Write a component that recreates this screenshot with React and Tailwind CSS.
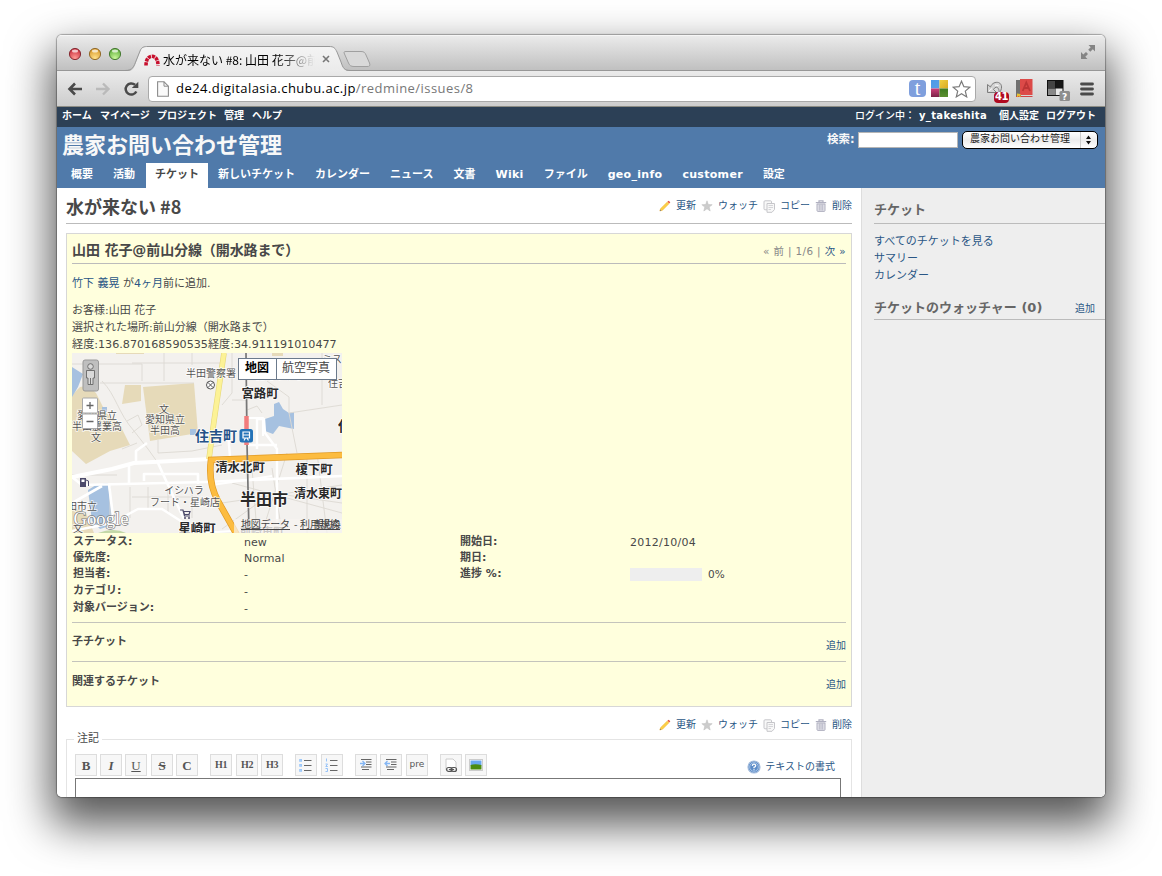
import React from "react";

const NAV = ["概要", "活動", "チケット", "新しいチケット", "カレンダー", "ニュース", "文書", "Wiki", "ファイル", "geo_info", "customer", "設定"];

function TrafficLight({ from, mid, rim }) {
  const id = "tl" + rim.slice(1);
  return (
    <svg width="14" height="14" viewBox="0 0 14 14">
      <defs>
        <radialGradient id={id} cx="50%" cy="85%" r="80%">
          <stop offset="0" stopColor={from} />
          <stop offset="1" stopColor={mid} />
        </radialGradient>
      </defs>
      <circle cx="7" cy="7" r="5.600" fill={`url(#${id})`} stroke={rim} strokeWidth=".9" />
      <ellipse cx="7" cy="4" rx="3" ry="1.500" fill="#fff" opacity=".7" />
    </svg>
  );
}

function TitleBar() {
  return (
    <div className="relative flex h-9 shrink-0 items-end bg-gradient-to-b from-[#ececec] to-[#bfbfbf]">
      <svg className="absolute inset-0" width="1048" height="36" viewBox="0 0 1048 36">
        <defs>
          <linearGradient id="tab" x1="0" y1="0" x2="0" y2="1">
            <stop offset="0" stopColor="#f4f4f4" />
            <stop offset="1" stopColor="#ebebeb" />
          </linearGradient>
        </defs>
        <path d="M0 .5H1048" stroke="#f6f6f6" />
        <path d="M0 35.500H1048" stroke="#979797" />
        <path d="M70 36C77 36 77.500 31 79.500 26L83.500 16C85 12.500 87 11.500 91 11.500H272C277 11.500 278 13 280 17L284 27C286 33 287 36 293 36Z" fill="url(#tab)" />
        <path d="M68 35.500C76 35.500 77 31 79 26L83 16C84.500 12 87 11.500 91 11.500H272C277 11.500 278 13 280 17L284 27C286 33 287 35.500 294 35.500" fill="none" stroke="#979797" />
        <path d="M289 16.500H304C307 16.500 308 17.500 309 20L312.500 28C313.500 31 312.500 31.500 310 31.500H297C294 31.500 292.500 30.500 291.500 28L287.500 19C286.500 17 287 16.500 289 16.500Z" fill="#d9d9d9" stroke="#a0a0a0" />
        <g fill="#858585">
          <path d="M1031.500 10H1038V16.500L1035.800 14.300L1033.300 16.800L1031.200 14.700L1033.700 12.200Z" />
          <path d="M1024 17V24H1030.500L1028.300 21.700L1031 19L1029 17L1026.300 19.400Z" />
        </g>
      </svg>
      <div className="relative flex h-full w-full items-center">
        <div className="mt-0.5 ml-[11px] flex gap-1.5 pb-px">
          <TrafficLight from="#ff9a94" mid="#c92c3c" rim="#7d2028" />
          <TrafficLight from="#ffe08a" mid="#d9992a" rim="#8a6220" />
          <TrafficLight from="#c9f79a" mid="#5fae3a" rim="#3c7228" />
        </div>
        <svg className="mt-3 ml-[21px]" width="18" height="13" viewBox="0 0 18 13">
          <path d="M3 12.500C3 6.500 5.500 3.300 9 3.300S15 6.500 15 12.500" fill="none" stroke="#c8102e" strokeWidth="3.600" strokeDasharray="3.200 .8" />
        </svg>
        <div className="mt-[13px] ml-0.5 w-[152px] overflow-hidden bg-gradient-to-r from-black from-75% to-transparent bg-clip-text font-['Noto_Sans_CJK_JP',sans-serif] text-[12px] leading-4 whitespace-nowrap text-transparent">
          水が来ない #8: 山田 花子@前山
        </div>
        <svg className="mt-3 ml-[7px]" width="8" height="8" viewBox="0 0 8 8">
          <path d="M1 1L7 7M7 1L1 7" stroke="#777" strokeWidth="1.600" />
        </svg>
      </div>
    </div>
  );
}

function ToolBar() {
  return (
    <div className="flex h-9 shrink-0 items-center border-b border-[#8c8c84] bg-gradient-to-b from-[#ebebeb] to-[#cdcdcd]">
      <svg className="ml-[10px]" width="16" height="14" viewBox="0 0 16 14">
        <path d="M15 7H3M8 1.500L2.500 7L8 12.500" fill="none" stroke="#4a4a4a" strokeWidth="2.600" />
      </svg>
      <svg className="ml-3" width="16" height="14" viewBox="0 0 16 14">
        <path d="M1 7H13M8 1.500L13.500 7L8 12.500" fill="none" stroke="#bababa" strokeWidth="2.400" />
      </svg>
      <svg className="ml-3" width="16" height="16" viewBox="0 0 16 16">
        <path d="M13.300 10.500A5.600 5.600 0 1 1 12 3.800" fill="none" stroke="#4a4a4a" strokeWidth="2.500" />
        <path d="M15.300 .8V7H8.800Z" fill="#4a4a4a" />
      </svg>
      <div className="ml-[9px] flex h-[26px] w-[828px] items-center rounded border border-[#a9a9a9] bg-white">
        <svg className="ml-2" width="12" height="16" viewBox="0 0 12 16">
          <path d="M.6 .8H7L11.400 5.200V15.200H.6Z" fill="#fafafa" stroke="#8b8b8b" strokeWidth="1.100" />
          <path d="M7 .8V5.200H11.400" fill="none" stroke="#8b8b8b" />
        </svg>
        <div className="ml-[7px] w-[733px] pb-0.5 font-['Open_Sans','Noto_Sans',sans-serif] text-[13px] leading-4 tracking-[0.45px] whitespace-nowrap text-[#777]">
          <span className="text-black">de24.digitalasia.chubu.ac.jp</span>/redmine/issues/8
        </div>
        <div className="flex h-[17px] w-[17px] items-center justify-center rounded-sm bg-[#7f9fdd] pb-0.5 font-['Liberation_Serif',serif] text-[20px] leading-none text-white">t</div>
        <svg className="ml-[5px]" width="17" height="17" viewBox="0 0 17 17">
          <defs>
            <linearGradient id="q1" x1="0" y1="0" x2="1" y2="1"><stop offset="0" stopColor="#4d9ae8" /><stop offset="1" stopColor="#5aa0e6" /></linearGradient>
            <linearGradient id="q2" x1="0" y1="0" x2="1" y2="1"><stop offset="0" stopColor="#f0d040" /><stop offset="1" stopColor="#d8a820" /></linearGradient>
            <linearGradient id="q3" x1="0" y1="0" x2="0" y2="1"><stop offset="0" stopColor="#d0407a" /><stop offset="1" stopColor="#7a2448" /></linearGradient>
            <linearGradient id="q4" x1="0" y1="0" x2="0" y2="1"><stop offset="0" stopColor="#3c7a20" /><stop offset="1" stopColor="#5c9030" /></linearGradient>
          </defs>
          <rect width="8.500" height="8.500" fill="url(#q1)" /><rect x="8.500" width="8.500" height="8.500" fill="url(#q2)" />
          <rect y="8.500" width="8.500" height="8.500" fill="url(#q3)" /><rect x="8.500" y="8.500" width="8.500" height="8.500" fill="url(#q4)" />
        </svg>
        <svg className="ml-1" width="19" height="18" viewBox="0 0 19 18">
          <path d="M9.500 1.200L11.900 6.700L17.800 7.200L13.300 11.100L14.700 16.900L9.500 13.800L4.300 16.900L5.700 11.100L1.200 7.200L7.100 6.700Z" fill="#fff" stroke="#7a7a7a" strokeWidth="1.200" />
        </svg>
      </div>
      <div className="relative ml-[10px] h-6 w-6">
        <svg className="absolute top-1 left-0" width="18" height="14" viewBox="0 0 18 14">
          <path d="M1.500 11.500V3.500L4.500 6C6 2 9.500 .8 12.500 1.500C16.500 3 16.500 8 13 12.500C13.500 8.500 12 6 10 6.200C8.800 6.500 8 7.500 7.500 8.500L10.500 11.500Z" fill="#d4d4d4" stroke="#7c7c7c" />
          <path d="M3 10L6 7.500M9 4L12.500 4.500" stroke="#fff" />
        </svg>
        <div className="absolute top-[15px] left-2 flex h-[11px] w-[15px] items-center justify-center rounded-sm bg-[#b00a20] font-['DejaVu_Sans'] text-[10px] leading-none font-bold tracking-[-.5px] text-white">41</div>
      </div>
      <svg className="ml-[6px]" width="17" height="19" viewBox="0 0 17 19">
        <rect x="0" y="1" width="5" height="16" fill="#707070" />
        <rect x="4" y="0" width="12.500" height="16" fill="#dc4a48" />
        <path d="M0 17.500H16.500" stroke="#d04444" />
        <path d="M1 14.500L4.500 15V18.500L2.500 17L1 18.500Z" fill="#e8c030" />
        <path d="M6.700 12L10.300 3.500L14 12M8 9H12.700" fill="none" stroke="#bc3535" strokeWidth="1.800" />
      </svg>
      <svg className="ml-[14px]" width="24" height="24" viewBox="0 0 24 24">
        <rect x="0" y="3" width="16.500" height="16" fill="#111" />
        <rect x="1" y="4" width="7" height="7" fill="#444" /><rect x="8.500" y="4" width="7" height="7" fill="#161616" />
        <rect x="1" y="11.500" width="7" height="6.500" fill="#888" /><rect x="8.500" y="11.500" width="7" height="6.500" fill="#e8e8e8" />
        <rect x="12.500" y="14" width="10.500" height="10" rx="1.500" fill="#8e8e8e" />
        <text x="17.700" y="22.500" textAnchor="middle" fontSize="9" fontWeight="bold" fontFamily="DejaVu Sans" fill="#fff">?</text>
      </svg>
      <svg className="ml-[9px]" width="14" height="14" viewBox="0 0 14 14">
        <path d="M1.500 2H12.500M1.500 7H12.500M1.500 12H12.500" stroke="#4a4a4a" strokeWidth="2.800" strokeLinecap="round" />
      </svg>
    </div>
  );
}

function TopMenu() {
  return (
    <div className="flex h-5 shrink-0 justify-between bg-[#2c4056] pr-[9px] pl-[5px] text-[10px] leading-[17px] font-bold whitespace-nowrap text-white">
      <div className="flex">
        <span className="w-[38px]">ホーム</span>
        <span className="w-[57px]">マイページ</span>
        <span className="w-[67px]">プロジェクト</span>
        <span className="w-7">管理</span>
        <span>ヘルプ</span>
      </div>
      <div className="flex">
        <span className="w-16 font-medium">ログイン中：</span>
        <span className="w-20 tracking-[0.35px]">y_takeshita</span>
        <span className="w-[47px]">個人設定</span>
        <span className="w-[50px]">ログアウト</span>
      </div>
    </div>
  );
}

function Header() {
  return (
    <div className="flex h-[61px] shrink-0 flex-col justify-between bg-[#507aaa] text-white">
      <div className="flex h-9 justify-between pr-[7px] pl-[5px]">
        <h1 className="pt-px text-[22px] leading-9 font-bold text-[#f8f8f8]">農家お問い合わせ管理</h1>
        <div className="flex h-[26px] items-center">
          <span className="w-[31px] text-[11.500px] leading-none font-bold text-[#f8f8f8]">検索:</span>
          <span className="h-4 w-[100px] border border-[#b5b5b5] bg-white" />
          <span className="ml-1 flex h-[18px] w-[136px] items-center justify-between rounded-[5px] border border-black bg-gradient-to-b from-white via-[#ececec] to-white pl-[7px] text-[10px] leading-none text-[#222]">
            <span className="pb-0.5">農家お問い合わせ管理</span>
            <svg width="17" height="16" viewBox="0 0 17 16">
              <path d="M.5 0V16" stroke="#ccc" />
              <path d="M8.500 3.500L11 7H6ZM8.500 12.500L11 9H6Z" fill="#111" />
            </svg>
          </span>
        </div>
      </div>
      <nav className="flex h-[25px] pl-1 text-[11px] leading-[23px] font-bold whitespace-nowrap">
        {NAV.map((n) => (
          <span
            key={n}
            className={
              n === "チケット"
                ? "ml-px w-[62px] bg-white text-center text-[#484848]"
                : /[a-z]/.test(n)
                  ? "px-[10px] tracking-[0.3px]"
                  : "px-[10px]"
            }
          >
            {n}
          </span>
        ))}
      </nav>
    </div>
  );
}

function PencilIcon() {
  return (
    <svg width="12" height="12" viewBox="0 0 12 12">
      <path d="M.8 11L1.700 8.500L8.300 2L10 3.700L3.500 10.200Z" fill="#fbd048" stroke="#f0b030" strokeWidth=".5" />
      <path d="M8.500 1.700L9.700 .7L11.300 2.300L10.200 3.500Z" fill="#e8503c" />
      <path d="M.8 11L1.300 9.600L2.300 10.600Z" fill="#777" />
    </svg>
  );
}
function StarIcon() {
  return (
    <svg width="12" height="12" viewBox="0 0 12 12">
      <path d="M6 .8L7.300 4.500L11.200 4.700L8.200 7.100L9.200 11L6 8.800L2.800 11L3.800 7.100L.8 4.700L4.700 4.500Z" fill="#cccccc" stroke="#bcbcbc" strokeWidth=".5" />
    </svg>
  );
}
function CopyIcon() {
  return (
    <svg width="13" height="13" viewBox="0 0 13 13" fill="#f8f8f8" stroke="#c6c6ca">
      <rect x="1" y=".8" width="7.500" height="9" rx="1" />
      <path d="M4 3.500H11.500V9.500L9 12.300H4Z" />
      <path d="M5.500 5.500H10M5.500 7.500H10M5.500 9.500H8" strokeWidth=".7" />
    </svg>
  );
}
function TrashIcon() {
  return (
    <svg width="12" height="12" viewBox="0 0 12 12" fill="none" stroke="#b0b0c0">
      <path d="M.8 2.600H11.200M4 2V.8H8V2" strokeWidth="1.200" />
      <path d="M2 4V10.500Q2 11.400 3 11.400H9Q10 11.400 10 10.500V4Z" fill="#e4e4ea" />
      <path d="M4.300 4.500V10.500M6 4.500V10.500M7.700 4.500V10.500" strokeWidth=".8" />
    </svg>
  );
}

function Contextual() {
  return (
    <div className="flex h-4 items-center text-[10px] leading-none whitespace-nowrap text-[#2a5685]">
      <PencilIcon /><span className="ml-[5px] w-[25px]">更新</span>
      <StarIcon /><span className="ml-[5px] w-[45px]">ウォッチ</span>
      <CopyIcon /><span className="ml-1 w-[35px]">コピー</span>
      <TrashIcon /><span className="ml-[5px] w-5">削除</span>
    </div>
  );
}

function MapView() {
  const halo = { stroke: "#fff", strokeWidth: 1.6, strokeOpacity: 0.8, paintOrder: "stroke" };
  const small = { fontSize: 10, fill: "#555", textAnchor: "middle", ...halo };
  const big = { fontSize: 12.4, fontWeight: 700, fill: "#2a2a2a", textAnchor: "middle", ...halo };
  return (
    <svg className="block shrink-0" width="270" height="180" viewBox="0 0 270 180" fontFamily="'Noto Sans CJK JP', sans-serif">
      <rect width="270" height="180" fill="#f3f1ee" />
      <g fill="#e6dab9">
        <path d="M0 42L8 34Q16 32 24 40L34 60L48 72L58 92L38 98L14 111L0 98Z" />
        <path d="M53 32H69V48L50 51Z" />
        <path d="M71 34L122 30L126 80L78 88Z" />
        <path d="M44 0H72V1H44ZM200 0H211V3H200ZM0 154L14 160L22 180H0Z" />
      </g>
      <g fill="#a6c1e0">
        <path d="M0 14L11 21L6 34L0 44Z" />
        <path d="M16 137L24 132L36 130L41 172L28 176L20 168Z" />
        <path d="M193 66L202 63V51L207 49L211 56L217 60L222 59V76L207 73L201 81L193 78Z" />
        <rect x="118" y="76" width="6" height="6" /><rect x="30" y="54" width="5" height="5" />
      </g>
      <path d="M26 180Q42 174 54 180Z" fill="#c3d8a8" />
      <g fill="none" stroke="#dcd9d3" strokeWidth=".9">
        <path d="M0 11H70V28M92 0V28M60 10H148M28 30H122M30 28C44 42 46 60 62 78L76 96L86 110M120 12V0M160 0V40L150 52M195 28L217 44V60L270 52M250 0V52M160 47H175V80M86 87V100L120 98L150 92" />
        <path d="M38 134V175M58 134V165M76 134V156M96 134V160M120 134V165M0 122H45M60 144H125M150 150L270 132M190 180L215 100M235 180V102M255 180L245 100M150 176L200 140L270 150M180 115L185 180M200 115L210 180M160 130L270 160M175 57L185 53L190 60M217 60L225 100M50 96L65 90M55 68L66 62L70 72L60 80M240 20L270 30" />
      </g>
      <g fill="none" stroke="#fff" strokeLinejoin="round">
        <path d="M0 124L40 116L62 110L138 106" strokeWidth="4" />
        <path d="M0 124L10 132L134 129L270 123" strokeWidth="2.600" />
        <path d="M64 110V98L75 90M57 111V132M72 128V121H126V131M86 110L96 132L112 166M37 131L42 172M0 150L30 133" strokeWidth="2.600" />
        <path d="M0 178L40 170L66 156H90L115 172L140 178M186 66H192L193 80L205 96V180M174 92H205M185 64V96M156 80L158 104" strokeWidth="2.400" />
        <path d="M175 65H191V83M140 132L200 123M160 178L130 180" strokeWidth="2" />
      </g>
      <path d="M152 0L142 68L137 106" fill="none" stroke="#e6d878" strokeWidth="5.600" />
      <path d="M152 0L142 68L137 106" fill="none" stroke="#fcf296" strokeWidth="4.500" />
      <path d="M270 102L139 107Q136 130 146 148L165 182" fill="none" stroke="#e09a24" strokeWidth="6.600" />
      <path d="M270 102L139 107Q136 130 146 148L165 182" fill="none" stroke="#fcbc40" strokeWidth="5.200" />
      <path d="M174 0L175 90L177 180" fill="none" stroke="#777" strokeWidth="1.700" />
      <path d="M174.500 63V92" stroke="#f27c7c" strokeWidth="4.500" />
      <g {...small}>
        <text x="139" y="24">半田警察署</text>
        <text x="92" y="60">文</text><text x="93" y="70">愛知県立</text><text x="93" y="81">半田高</text>
        <text x="25" y="66">愛知県立</text><text x="25" y="77">半田農業高</text><text x="24" y="88">文</text>
        <text x="112" y="141">イシハラ</text><text x="113" y="153">フード・星崎店</text>
        <text x="10" y="157">田市立</text><text x="6" y="179">文</text>
        <text x="265" y="10">ミスタ</text><text x="266" y="34">住吉</text>
      </g>
      <g {...big}>
        <text x="188" y="45">宮路町</text>
        <text x="168" y="119">清水北町</text>
        <text x="242" y="121">榎下町</text>
        <text x="246" y="145" fontSize="12">清水東町</text>
        <text x="125" y="180">星崎町</text>
        <text x="192" y="152" fontSize="16">半田市</text>
        <text x="273" y="78" fontSize="14">住</text>
        <text x="206" y="26">北末広町</text>
      </g>
      <text x="144" y="88" fontSize="14" fontWeight="700" fill="#245288" textAnchor="middle" {...halo}>住吉町</text>
      <rect x="167.500" y="76" width="13.500" height="13.500" rx="2.500" fill="#2473b8" />
      <path d="M171 79H177.500V85H171ZM172 87.500L173.500 85M176.500 87.500L175 85M171 82H177.500" fill="none" stroke="#fff" strokeWidth="1.200" />
      <circle cx="138.500" cy="32" r="4" fill="#fff" stroke="#555" /><path d="M135.700 29.200L141.300 34.800M141.300 29.200L135.700 34.800" stroke="#555" />
      <path d="M8 125H14V134H8Z" fill="#4c4a6a" /><path d="M14 127L16.500 128V133" fill="none" stroke="#4c4a6a" />
      <rect x="9.500" y="126.500" width="3" height="2.500" fill="#fff" />
      <path d="M108 157H111L112.500 163H118M111.500 158.500H118L117 161.500H112.500Z" fill="none" stroke="#4c4a6a" strokeWidth="1.200" /><circle cx="113" cy="165" r="1" fill="#4c4a6a" /><circle cx="117" cy="165" r="1" fill="#4c4a6a" />
      <text x="1.500" y="171.500" fontSize="19" fontFamily="'Liberation Serif', serif" fill="#fff" stroke="#7d7d7d" strokeWidth="1.300" paintOrder="stroke" textLength="55" lengthAdjust="spacingAndGlyphs">Google</text>
      <text x="168" y="183" fontSize="11" fontWeight="700" fill="#666" {...halo}>前崎東町</text>
      <rect x="162" y="166" width="108" height="14" fill="#f6f4f1" opacity=".7" />
      <g fontSize="10" fill="#444">
        <text x="169" y="174.500" textLength="49">地図データ</text><text x="222" y="174.500">-</text><text x="228" y="174.500">利用規約</text><text x="243" y="174.500" textLength="26" lengthAdjust="spacingAndGlyphs">規約条</text>
      </g>
      <path d="M169 176.500H218M228 176.500H268" stroke="#444" />
      <rect x="11" y="7" width="15.500" height="31" rx="2" fill="#bfbfbf" stroke="#999" />
      <g fill="#d9d9d9" stroke="#666" strokeWidth=".9"><circle cx="18.500" cy="13.500" r="2.800" /><path d="M14.500 17.500H22.500V25H21V31.500H16V25H14.500Z" /><path d="M18.500 25V31" /></g>
      <g stroke="#a8a8a8" fill="#fff"><rect x="10.500" y="45" width="15" height="15" rx="1" /><rect x="10.500" y="61" width="15" height="14.500" rx="1" /></g>
      <path d="M14.500 52.500H21.500M18 49V56M14.500 68.500H21.500" stroke="#666" strokeWidth="1.300" />
      <rect x="166.500" y="5.500" width="98" height="21" fill="#fff" stroke="#6b7a8c" />
      <path d="M204.500 5V26" stroke="#6b7a8c" />
      <text x="185" y="19" fontSize="12" fontWeight="700" textAnchor="middle" fill="#000">地図</text>
      <text x="234" y="19" fontSize="12" textAnchor="middle" fill="#444">航空写真</text>
    </svg>
  );
}

function Attributes() {
  const label = "w-[171px] font-bold";
  return (
    <div className="flex h-[89px] pt-px pl-px text-[11px] leading-4">
      <div className="w-[387px]">
        <div className="flex h-4"><span className={label}>ステータス:</span><span className="pt-px">new</span></div>
        <div className="flex h-4"><span className={label}>優先度:</span><span className="pt-px tracking-[0.15px]">Normal</span></div>
        <div className="flex h-[17px]"><span className={label}>担当者:</span><span className="pt-px">-</span></div>
        <div className="flex h-[17px]"><span className={label}>カテゴリ:</span><span className="pt-px">-</span></div>
        <div className="flex h-4"><span className={label}>対象バージョン:</span><span className="pt-px">-</span></div>
      </div>
      <div>
        <div className="flex h-4"><span className="w-[170px] font-bold">開始日:</span><span className="pt-px tracking-[0.25px]">2012/10/04</span></div>
        <div className="h-4 font-bold">期日:</div>
        <div className="flex h-4"><span className="w-[170px] font-bold">進捗 <span className="tracking-[0.5px]">%:</span></span><span className="mt-0.5 h-[13px] w-[72px] bg-[#eee]" /><span className="ml-1.5 text-[10.500px]">0%</span></div>
      </div>
    </div>
  );
}

function Issue() {
  return (
    <div className="h-[474px] border border-[#d7d7d7] bg-[#ffffdd] px-[5px]">
      <div className="flex h-[30px] items-center justify-between border-b border-[#bbb]">
        <h3 className="mt-0.5 text-[14px] leading-none font-bold tracking-[-0.1px]">山田 花子@前山分線（開水路まで）</h3>
        <div className="mt-[5px] text-[10.400px] leading-none tracking-[0.4px] text-[#888]">« 前 | 1/6 | <span className="text-[#2a5685]">次 »</span></div>
      </div>
      <p className="mt-[11px] h-[18px] text-[11px] leading-[18px]"><span className="text-[#2a5685]">竹下 義晃</span> が<span className="text-[#2a5685]">4ヶ月</span>前に追加.</p>
      <div className="mt-[9px] h-[51px] text-[11px] leading-[17px] whitespace-nowrap">
        <div>お客様:山田 花子</div>
        <div>選択された場所:前山分線（開水路まで）</div>
        <div className="text-[11.150px]">経度:136.870168590535経度:34.911191010477</div>
      </div>
      <MapView />
      <Attributes />
      <div className="flex h-[39px] justify-between border-t border-[#c4c4bc]">
        <span className="pt-[11px] text-[11px] leading-4 font-bold">子チケット</span>
        <span className="pt-[15px] text-[10px] leading-4 text-[#2a5685]">追加</span>
      </div>
      <div className="flex justify-between border-t border-[#c4c4bc]">
        <span className="pt-[12px] text-[11px] leading-4 font-bold">関連するチケット</span>
        <span className="pt-[15px] text-[10px] leading-4 text-[#2a5685]">追加</span>
      </div>
    </div>
  );
}

function Btn({ children, gap }) {
  return (
    <span className={"flex h-[22px] w-[22px] items-center justify-center border border-[#ddd] bg-[#f7f7f7] font-['Liberation_Serif',serif] text-[13px] leading-none font-bold text-[#555] " + (gap || "ml-[3px]")}>
      {children}
    </span>
  );
}

function ListIcon({ numbered }) {
  return (
    <svg width="14" height="14" viewBox="0 0 14 14">
      <path d="M5 2.500H12.500M5 7.500H12.500M5 12.500H12.500" stroke="#666" />
      {numbered
        ? <path d="M1.500 .5V3.500M.5 6H2.500L.8 8.500H2.800M.5 10.500H2.500V13.500H.5" fill="none" stroke="#8abcf8" strokeWidth=".9" />
        : <g fill="none" stroke="#9cc8fa"><rect x=".7" y="1.500" width="1.800" height="1.800" /><rect x=".7" y="6.500" width="1.800" height="1.800" /><rect x=".7" y="11.500" width="1.800" height="1.800" /></g>}
    </svg>
  );
}

function IndentIcon({ out }) {
  return (
    <svg width="14" height="14" viewBox="0 0 14 14">
      <path d="M2 1.500H12.500M7 4H12.500M7 6.500H12.500M2 9H12.500M3 11.500H10" stroke="#666" strokeWidth="1.200" />
      <path d={out ? "M6 5.500H1M3.500 3L1 5.500L3.500 8" : "M1 5.500H6M3.500 3L6 5.500L3.500 8"} fill="none" stroke="#84b6f4" strokeWidth="1.300" />
    </svg>
  );
}

function Editor() {
  return (
    <fieldset className="h-[80px] border border-b-0 border-[#e4e4e4] px-2">
      <legend className="ml-[-1px] h-4 px-[3px] text-[11px] leading-4">注記</legend>
      <div className="mt-[7px] flex h-[22px]">
        <Btn gap="ml-0">B</Btn>
        <Btn><i>I</i></Btn>
        <Btn><span className="font-normal underline">U</span></Btn>
        <Btn gap="ml-1"><span className="line-through">S</span></Btn>
        <Btn>C</Btn>
        <Btn gap="ml-3"><span className="text-[10px] tracking-[-.4px]">H1</span></Btn>
        <Btn gap="ml-1"><span className="text-[10px] tracking-[-.4px]">H2</span></Btn>
        <Btn><span className="text-[10px] tracking-[-.4px]">H3</span></Btn>
        <Btn gap="ml-3"><ListIcon /></Btn>
        <Btn gap="ml-1"><ListIcon numbered /></Btn>
        <Btn gap="ml-3"><IndentIcon /></Btn>
        <Btn><IndentIcon out /></Btn>
        <Btn gap="ml-1"><span className="pb-0.5 font-['DejaVu_Sans'] text-[9px] font-normal">pre</span></Btn>
        <Btn gap="ml-3">
          <svg width="14" height="15" viewBox="0 0 14 15">
            <path d="M2 1H9L12 4V12H2Z" fill="#fff" stroke="#ccc" />
            <g fill="none" stroke="#555" strokeWidth="1.200"><rect x="2.600" y="9.500" width="5.500" height="4" rx="2" /><rect x="7" y="9.500" width="5.500" height="4" rx="2" /><path d="M5 11.500H10" /></g>
          </svg>
        </Btn>
        <Btn>
          <svg width="14" height="12" viewBox="0 0 14 12">
            <rect x=".5" y=".5" width="13" height="11" fill="#fff" stroke="#ccc" />
            <rect x="1.500" y="1.500" width="11" height="5" fill="#6aa8f0" /><path d="M1.500 6Q6 4.500 12.500 6V10.500H1.500Z" fill="#4c8c10" />
          </svg>
        </Btn>
        <div className="ml-auto flex items-center pt-1 pr-2 text-[10px] leading-none text-[#2a5685]">
          <svg className="mr-1" width="14" height="14" viewBox="0 0 14 14">
            <circle cx="7" cy="7" r="6" fill="#5c8cc8" stroke="#a4bcdc" strokeWidth="1.200" />
            <circle cx="7" cy="7" r="4.300" fill="none" stroke="#c4d8f0" strokeWidth=".7" />
            <path d="M5.300 5.800Q5.500 4.200 7 4.200T8.700 5.700Q8.700 6.600 7 7.300V8.200M7 9.200V10.300" fill="none" stroke="#fff" strokeWidth="1.300" />
          </svg>
          テキストの書式
        </div>
      </div>
      <div className="mt-0.5 mr-0.5 h-12 border border-[#777] bg-white" />
    </fieldset>
  );
}

function Sidebar() {
  return (
    <aside className="w-[244px] shrink-0 border-l border-[#ddd] bg-[#eee] pl-3">
      <h3 className="h-9 border-b border-[#bbb] pt-[13px] text-[13px] leading-[18px] font-bold text-[#666]">チケット</h3>
      <div className="mt-[9px] text-[11px] leading-[17px] text-[#2a5685]">
        <div>すべてのチケットを見る</div><div>サマリー</div><div>カレンダー</div>
      </div>
      <div className="mt-[11px] flex h-[25px] items-center justify-between border-b border-[#bbb] pr-[10px]">
        <h3 className="text-[13px] leading-none font-bold text-[#666]">チケットのウォッチャー (0)</h3>
        <span className="mt-1 text-[10px] leading-none text-[#2a5685]">追加</span>
      </div>
    </aside>
  );
}

export default function App() {
  return (
    <div className="h-[876px] w-[1162px] overflow-hidden bg-white pt-[35px] pl-[57px] font-['DejaVu_Sans','Noto_Sans_CJK_JP',sans-serif] text-[#484848]">
      <div className="h-[762px] w-[1048px] rounded-[5px] shadow-[0_0_1px_1px_rgba(0,0,0,0.3),0_22px_44px_6px_rgba(0,0,0,0.66)]">
        <div className="flex h-full w-full flex-col overflow-hidden rounded-[5px]">
          <TitleBar />
          <ToolBar />
          <TopMenu />
          <Header />
          <div className="flex min-h-0 flex-1 bg-white">
            <main className="min-w-0 flex-1 pr-[9px] pl-[9px]">
              <div className="mb-[9px] flex h-9 justify-between border-b border-[#bbb]">
                <h2 className="font-['Noto_Sans_CJK_JP',sans-serif] text-[18px] leading-9 font-bold">水が来ない #8</h2>
                <div className="pt-[10px]"><Contextual /></div>
              </div>
              <Issue />
              <div className="mt-[10px] mb-[-2px] flex justify-end"><Contextual /></div>
              <Editor />
            </main>
            <Sidebar />
          </div>
        </div>
      </div>
    </div>
  );
}
